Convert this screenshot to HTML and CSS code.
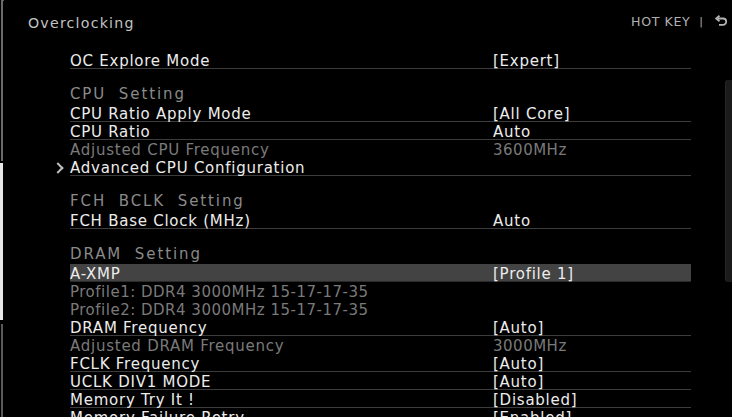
FILE: index.html
```html
<!DOCTYPE html>
<html>
<head>
<meta charset="utf-8">
<link rel="stylesheet" href="styles.css">
</head>
<body>
<div class="screen">
  <div class="edge">
    <div class="edge-top"></div>
    <div class="edge-mid"></div>
    <div class="edge-bot"></div>
  </div>
  <div class="main">
    <header class="topbar">
      <div class="title">Overclocking</div>
      <div class="hotkey">
        <span class="hk-text">HOT KEY</span>
        <span class="hk-sep">|</span>
        <svg class="hk-icon" width="14" height="12" viewBox="0 0 14 12">
          <path d="M4 3.5 H9 A3.2 3.2 0 0 1 9 9.9 H5" fill="none" stroke="#b5b5b5" stroke-width="1.8"/>
          <path d="M5.5 0.8 L2.2 3.5 L5.5 6.2" fill="none" stroke="#b5b5b5" stroke-width="1.8"/>
        </svg>
      </div>
    </header>
    <div class="content">
      <div class="list">
        <div class="row line"><span class="label">OC Explore Mode</span><span class="value">[Expert]</span></div>

        <div class="section">CPU Setting</div>
        <div class="row line"><span class="label">CPU Ratio Apply Mode</span><span class="value">[All Core]</span></div>
        <div class="row line"><span class="label">CPU Ratio</span><span class="value">Auto</span></div>
        <div class="row dim"><span class="label">Adjusted CPU Frequency</span><span class="value num">3600MHz</span></div>
        <div class="row line sub"><span class="label">Advanced CPU Configuration</span><span class="value"></span></div>

        <div class="section">FCH BCLK Setting</div>
        <div class="row line"><span class="label">FCH Base Clock (MHz)</span><span class="value">Auto</span></div>

        <div class="section">DRAM Setting</div>
        <div class="row active"><span class="label">A-XMP</span><span class="value">[Profile 1]</span></div>
        <div class="row dim"><span class="label num">Profile1: DDR4 3000MHz 15-17-17-35</span><span class="value"></span></div>
        <div class="row dim"><span class="label num">Profile2: DDR4 3000MHz 15-17-17-35</span><span class="value"></span></div>
        <div class="row line"><span class="label">DRAM Frequency</span><span class="value">[Auto]</span></div>
        <div class="row dim"><span class="label">Adjusted DRAM Frequency</span><span class="value num">3000MHz</span></div>
        <div class="row line"><span class="label">FCLK Frequency</span><span class="value">[Auto]</span></div>
        <div class="row line"><span class="label">UCLK DIV1 MODE</span><span class="value">[Auto]</span></div>
        <div class="row line"><span class="label">Memory Try It !</span><span class="value">[Disabled]</span></div>
        <div class="row line"><span class="label">Memory Failure Retry</span><span class="value">[Enabled]</span></div>
      </div>
      <div class="scroll"><div class="thumb"></div></div>
    </div>
  </div>
</div>
</body>
</html>
```

FILE: styles.css
```css
html, body {
  margin: 0;
  padding: 0;
  background: #000;
}
body {
  width: 732px;
  height: 417px;
  overflow: hidden;
  font-family: "DejaVu Sans", "Verdana", sans-serif;
  color: #e6e6e6;
}
.screen {
  display: flex;
  width: 732px;
  height: 417px;
  overflow: hidden;
}
.edge {
  width: 4px;
  display: flex;
  flex-direction: column;
  flex: none;
}
.edge-top {
  height: 160px;
  border-left: 2px solid #6a6a6a;
  margin-left: 1px;
  border-top: 1px solid #6a6a6a;
}
.edge-mid {
  height: 157px;
  margin-top: 2px;
  background: #e8e8e8;
  width: 3px;
}
.edge-bot {
  flex: 1;
  margin-top: 4px;
  border-left: 2px solid #5a5a5a;
  margin-left: 1px;
}
.main {
  flex: 1;
  display: flex;
  flex-direction: column;
  min-width: 0;
}
.topbar {
  height: 44px;
  display: flex;
  align-items: center;
  justify-content: space-between;
  padding-left: 24px;
  padding-right: 4px;
  flex: none;
}
.title {
  font-size: 14.2px;
  letter-spacing: 1.2px;
  color: #c2c2c2;
  margin-top: 1px;
}
.hotkey {
  display: flex;
  align-items: center;
  color: #b0b0b0;
  font-size: 12.6px;
  margin-top: -2px;
}
.hk-text {
  letter-spacing: 0.6px;
}
.hk-sep {
  margin-left: 9px;
  margin-right: 11px;
  font-size: 11px;
}
.hk-icon {
  display: block;
}
.content {
  flex: 1;
  display: flex;
  min-height: 0;
}
.list {
  padding-top: 7px;
  padding-left: 66px;
  width: 621px;
  flex: none;
}
.row {
  position: relative;
  display: grid;
  grid-template-columns: 423px 1fr;
  padding-top: 2px;
  height: 15px;
  line-height: 17px;
  border-bottom: 1px solid transparent;
  font-size: 15px;
  letter-spacing: 0.75px;
  white-space: nowrap;
  color: #ececec;
}
.row .num {
  letter-spacing: 0.5px;
}
.row.line {
  border-bottom-color: #3c3c3c;
}
.row.dim {
  color: #7a7a7a;
}
.row.active {
  background: #434343;
  border-bottom-color: #2a2a2a;
}
.row.sub::before {
  content: "";
  position: absolute;
  left: -16px;
  top: 6px;
  width: 6px;
  height: 6px;
  border-top: 2px solid #bdbdbd;
  border-right: 2px solid #bdbdbd;
  transform: rotate(45deg);
}
.section {
  padding-top: 16px;
  padding-bottom: 1px;
  height: 18px;
  line-height: 18px;
  font-size: 15px;
  letter-spacing: 1.9px;
  word-spacing: 6px;
  color: #8a8a8a;
}
.scroll {
  flex: 1;
  display: flex;
  justify-content: flex-end;
  padding-top: 36px;
}
.thumb {
  width: 6px;
  height: 202px;
  background: #1b1b1b;
  border-left: 1px solid #262626;
  border-radius: 3px 0 0 3px;
}
```
